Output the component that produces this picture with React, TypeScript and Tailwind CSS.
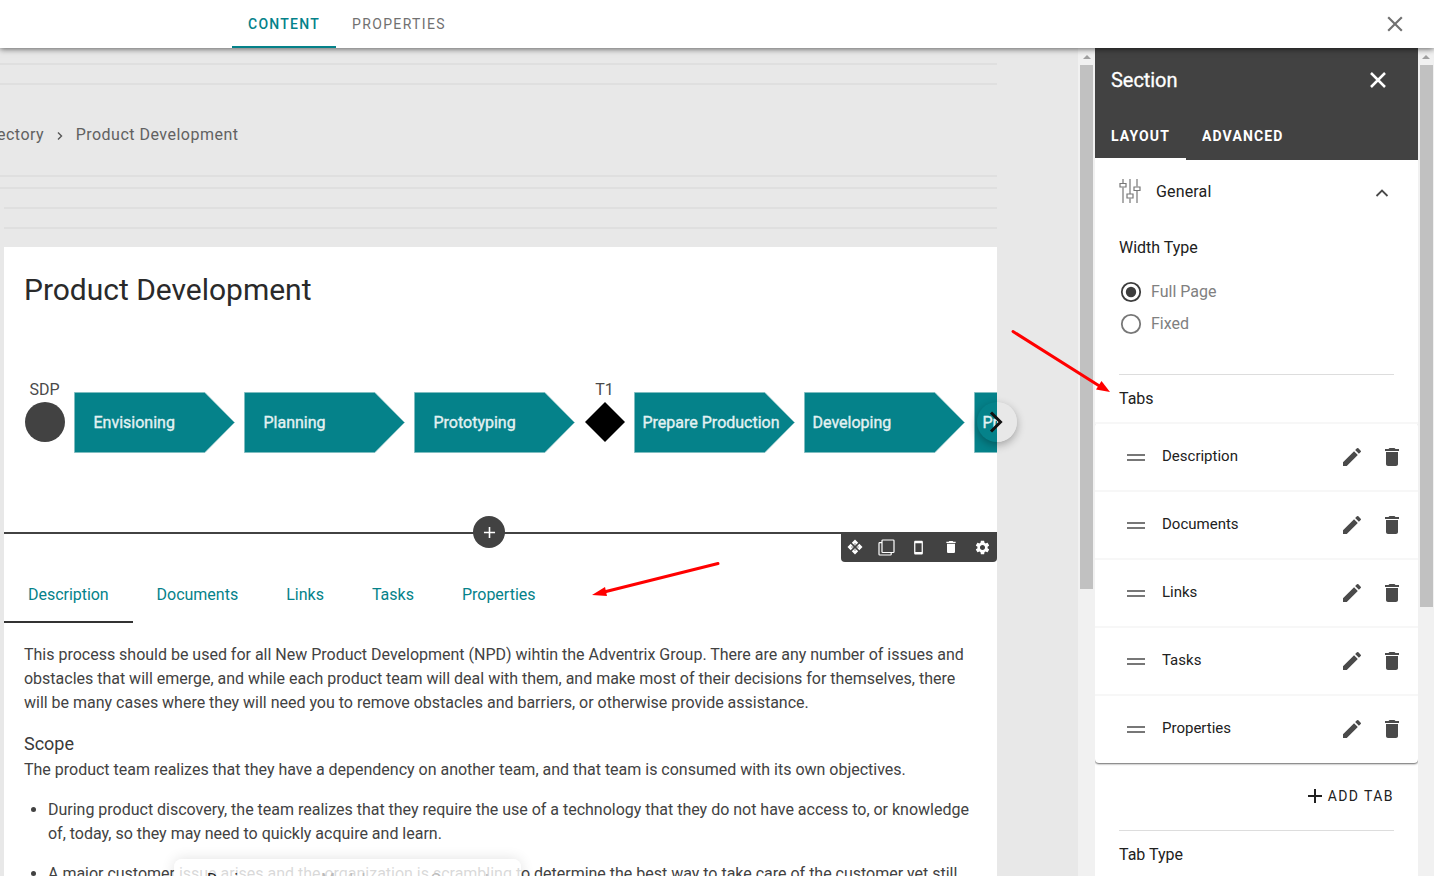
import React from 'react';

const PATHS = {
  close: 'M19 6.41L17.59 5 12 10.59 6.41 5 5 6.41 10.59 12 5 17.59 6.41 19 12 13.41 17.59 19 19 17.59 13.41 12z',
  pencil: 'M3 17.25V21h3.75L17.81 9.94l-3.75-3.75L3 17.25zM20.71 7.04a.996.996 0 0 0 0-1.41l-2.34-2.34a.996.996 0 0 0-1.41 0l-1.83 1.83 3.75 3.75 1.83-1.83z',
  trash: 'M6 19c0 1.1.9 2 2 2h8c1.1 0 2-.9 2-2V7H6v12zM19 4h-3.5l-1-1h-5l-1 1H5v2h14V4z',
  plus: 'M19 13h-6v6h-2v-6H5v-2h6V5h2v6h6v2z',
  gear: 'M19.14 12.94c.04-.3.06-.61.06-.94 0-.32-.02-.64-.07-.94l2.03-1.58c.18-.14.23-.41.12-.61l-1.92-3.32c-.12-.22-.37-.29-.59-.22l-2.39.96c-.5-.38-1.03-.7-1.62-.94l-.36-2.54c-.04-.24-.24-.41-.48-.41h-3.84c-.24 0-.43.17-.47.41l-.36 2.54c-.59.24-1.13.57-1.62.94l-2.39-.96c-.22-.08-.47 0-.59.22L2.74 8.87c-.12.21-.08.47.12.61l2.03 1.58c-.05.3-.09.63-.09.94s.02.64.07.94l-2.03 1.58c-.18.14-.23.41-.12.61l1.92 3.32c.12.22.37.29.59.22l2.39-.96c.5.38 1.03.7 1.62.94l.36 2.54c.05.24.24.41.48.41h3.84c.24 0 .44-.17.47-.41l.36-2.54c.59-.24 1.13-.56 1.62-.94l2.39.96c.22.08.47 0 .59-.22l1.92-3.32c.12-.22.07-.47-.12-.61l-2.01-1.58zM12 15.6c-1.98 0-3.6-1.62-3.6-3.6s1.62-3.6 3.6-3.6 3.6 1.62 3.6 3.6-1.62 3.6-3.6 3.6z',
  phone: 'M17 1.01L7 1c-1.1 0-2 .9-2 2v18c0 1.1.9 2 2 2h10c1.1 0 2-.9 2-2V3c0-1.1-.9-1.99-2-1.99zM17 19H7V5h10v14z',
};

function Icon({ name, className }: { name: keyof typeof PATHS; className: string }) {
  return (
    <svg viewBox="0 0 24 24" fill="currentColor" className={className}>
      <path d={PATHS[name]} />
    </svg>
  );
}

function Header() {
  return (
    <header className="relative z-20 flex h-12 shrink-0 bg-white pl-[232px] text-sm leading-5 shadow-[0_1px_6px_rgba(0,0,0,0.6)]">
      <div className="flex w-[104px] items-center justify-center border-b-2 border-[#05828a] pt-0.5 font-medium tracking-[1.25px] text-[#05828a]">CONTENT</div>
      <div className="flex items-center px-4 tracking-[1.35px] text-[#717171]">PROPERTIES</div>
      <div className="ml-auto flex w-[78px] items-center justify-center">
        <Icon name="close" className="size-[26px] text-[#717171]" />
      </div>
    </header>
  );
}

function Scrollbar({ size, thumb }: { size: string; thumb: string }) {
  return (
    <div className={`flex shrink-0 flex-col items-center bg-[#f1f1f1] pt-[7px] ${size}`}>
      <svg viewBox="0 0 8 4" className="h-1 w-2 shrink-0">
        <path d="M4 0L8 4H0z" fill="#a0a0a0" />
      </svg>
      <div className={`mt-[6px] w-[13px] shrink-0 bg-[#c1c1c1] ${thumb}`} />
    </div>
  );
}

function Stage({ label, pad = 'pl-[19.5px]' }: { label: string; pad?: string }) {
  return (
    <div className={`relative h-[61px] w-40 shrink-0 ${pad}`}>
      <svg viewBox="0 0 160 61" className="absolute inset-0 h-[61px] w-40 overflow-visible">
        <path d="M.5 .5H130.8L160.500 30.5L130.8 60.5H.5Z" fill="#05828a" stroke="#7fbcc0" strokeWidth="0.9" />
      </svg>
      <span className="relative leading-[61px] whitespace-nowrap text-[#e3f1f2] [-webkit-text-stroke:0.35px_#e3f1f2]">{label}</span>
    </div>
  );
}

function Marker({ label, diamond }: { label: string; diamond?: boolean }) {
  return (
    <div className="-mt-3 flex w-10 shrink-0 flex-col items-center pl-px text-[#4a4a4a]">
      <span className="h-[22px] leading-[20px]">{label}</span>
      <svg viewBox="0 0 40 40" className="size-10 shrink-0">
        {diamond ? <path d="M20 0L40 20L20 40L0 20z" fill="#000" /> : <circle cx="20" cy="20" r="20" fill="#424242" />}
      </svg>
    </div>
  );
}

function Process() {
  return (
    <div className="relative mt-[83px]">
      <div className="flex h-[61px] gap-[10px] pl-5 text-base [clip-path:inset(-30px_0_0_0)]">
        <Marker label="SDP" />
        <Stage label="Envisioning" />
        <Stage label="Planning" />
        <Stage label="Prototyping" />
        <Marker label="T1" diamond />
        <Stage label="Prepare Production" pad="pl-[8.5px]" />
        <Stage label="Developing" pad="pl-[8.5px]" />
        <Stage label="Production" pad="pl-[8.5px]" />
      </div>
      <div className="absolute top-[10px] -right-5 flex size-10 items-center justify-center overflow-hidden rounded-full shadow-[0_3px_8px_rgba(0,0,0,0.3)]">
        <svg viewBox="0 0 40 40" className="size-10">
          <path d="M20 0A20 20 0 0 1 20 40z" fill="#e8e8e8" />
          <path d="M14 10.5L23.500 20L14 29.5" fill="none" stroke="#111" strokeWidth="3" />
        </svg>
      </div>
    </div>
  );
}

function Toolbar() {
  return (
    <div className="absolute top-0 right-0 flex h-[30px] w-[156px] justify-center rounded-b bg-[#424242] pr-px text-white *:flex *:w-8 *:shrink-0 *:items-center *:justify-center">
      <div>
        <svg viewBox="0 0 16 16" className="size-4" fill="currentColor">
          <path d="M8 .5L11.2 3.7L8 6.7L4.8 3.7zM8 15.5L4.8 12.3L8 9.3L11.2 12.3zM.5 8L3.7 4.8L6.7 8L3.7 11.2zM15.5 8L12.3 11.2L9.3 8L12.3 4.8z" />
          <path d="M7 4h2v2H7zM7 10h2v2H7zM4 7h2v2H4zM10 7h2v2h-2z" fill="#424242" fillOpacity="0.3" />
        </svg>
      </div>
      <div>
        <svg viewBox="0 0 17 17" className="size-[17px]" fill="none" stroke="currentColor" strokeWidth="1.2">
          <rect x="4" y="1" width="12" height="12.5" rx=".8" />
          <path d="M4 3.7H1.8a.8.8 0 0 0-.8.8V15.2a.8.8 0 0 0 .8.8H12.4a.8.8 0 0 0 .8-.8V13.5" />
        </svg>
      </div>
      <div>
        <Icon name="phone" className="size-[15px]" />
      </div>
      <div>
        <Icon name="trash" className="size-4" />
      </div>
      <div>
        <Icon name="gear" className="size-[17px]" />
      </div>
    </div>
  );
}

const CONTENT_TABS = ['Documents', 'Links', 'Tasks', 'Properties'];

function ContentSection() {
  return (
    <section className="relative border-t-2 border-[#424242]">
      <div className="absolute -top-[18px] left-[469px] flex size-8 items-center justify-center rounded-full bg-[#424242] text-white">
        <Icon name="plus" className="size-[19px]" />
      </div>
      <div className="absolute -top-0.5 right-0">
        <Toolbar />
      </div>
      <div className="mt-8 flex h-[57px] text-base text-[#05828a]">
        <div className="w-[129px] border-b-2 border-[#333] pl-6 leading-[58px] tracking-[-0.03px]">Description</div>
        <div className="flex gap-12 pl-[23.5px] leading-[58px]">
          {CONTENT_TABS.map((t) => (
            <span key={t}>{t}</span>
          ))}
        </div>
      </div>
      <div className="px-5 pt-5 text-base leading-6 tracking-[-0.008px] whitespace-nowrap text-[#424242]">
        <p>
          This process should be used for all New Product Development (NPD) wihtin the Adventrix Group. There are any number of issues and
          <br />
          obstacles that will emerge, and while each product team will deal with them, and make most of their decisions for themselves, there
          <br />
          will be many cases where they will need you to remove obstacles and barriers, or otherwise provide assistance.
        </p>
        <h2 className="mt-[15px] text-lg leading-7 text-[#3a3a3a]">Scope</h2>
        <p>The product team realizes that they have a dependency on another team, and that team is consumed with its own objectives.</p>
        <ul className="mt-4 list-disc space-y-4 pl-6">
          <li>
            During product discovery, the team realizes that they require the use of a technology that they do not have access to, or knowledge
            <br />
            of, today, so they may need to quickly acquire and learn.
          </li>
          <li>A major customer issue arises and the organization is scrambling to determine the best way to take care of the customer yet still</li>
        </ul>
      </div>
    </section>
  );
}

function Canvas() {
  return (
    <main className="relative min-w-0 flex-1 overflow-hidden bg-[#e8e8e8]">
      <div className="w-[997px]">
        <div className="mt-[15px] h-[22px] border-y-2 border-[#dfdfdf]" />
        <nav className="mt-[35px] -ml-[3px] flex h-[30px] items-center text-base tracking-[0.49px] text-[#616161]">
          <span>ectory</span>
          <svg viewBox="0 0 8 10" className="mt-px ml-3 h-[10px] w-2" fill="none" stroke="#555" strokeWidth="1.4">
            <path d="M2 1.500L5.500 5L2 8.500" />
          </svg>
          <span className="ml-[11.5px]">Product Development</span>
        </nav>
        <div className="mt-[25px] h-[14px] border-y-2 border-[#dfdfdf]" />
        <div className="mt-[18px] ml-1 h-[22px] border-y-2 border-[#dfdfdf]" />
        <article className="mt-[18px] ml-1 h-[660px] bg-white">
          <div className="h-[285px] pt-6">
            <h1 className="pl-5 text-[30px] leading-[38px] tracking-[-0.02px] text-[#2a2a2a]">Product Development</h1>
            <Process />
          </div>
          <ContentSection />
        </article>
      </div>
      <div className="absolute top-[811px] left-[174px] flex h-14 w-[347px] gap-[65px] rounded-lg bg-white/80 pt-[11px] pl-[33px] text-base leading-5 text-[#bbb] shadow-[0_0_14px_rgba(0,0,0,0.12)]">
        <span className="text-[#222]">Design</span>
        <span>Model</span>
        <span>Connect</span>
      </div>
    </main>
  );
}

const TABS = ['Description', 'Documents', 'Links', 'Tasks', 'Properties'];

function TabRow({ label }: { label: string }) {
  return (
    <li className="flex h-[68px] items-center border-t-2 border-[#f7f7f7] pl-8">
      <svg viewBox="0 0 18 7" className="h-[7px] w-[18px]" fill="#777">
        <path d="M0 0h18v2H0zM0 5h18v2H0z" />
      </svg>
      <span className="-mt-0.5 ml-[17px] w-[178px] text-[15px] text-[#212121]">{label}</span>
      <Icon name="pencil" className="-mt-px size-6 text-[#4a4a4a]" />
      <Icon name="trash" className="-mt-px ml-4 size-6 text-[#4a4a4a]" />
    </li>
  );
}

function Radio({ label, checked }: { label: string; checked?: boolean }) {
  return (
    <div className="flex h-8 items-center gap-[9px] pl-px text-[#808080]">
      <svg viewBox="0 0 22 22" className="size-[22px]">
        <circle cx="11" cy="11" r="9.2" fill="none" stroke={checked ? '#3d3d3d' : '#777'} strokeWidth="1.8" />
        {checked && <circle cx="11" cy="11" r="5.2" fill="#3d3d3d" />}
      </svg>
      <span>{label}</span>
    </div>
  );
}

function Panel() {
  return (
    <aside className="w-[323px] shrink-0 overflow-hidden bg-white text-base text-[#212121]">
      <div className="flex h-28 flex-col bg-[#424242] text-white">
        <div className="flex h-16 items-center justify-between pr-7 pl-4">
          <span className="text-xl tracking-[-0.05px] [-webkit-text-stroke:0.3px_white]">Section</span>
          <svg viewBox="0 0 24 24" className="size-6">
            <path d="M5 5L19 19M19 5L5 19" stroke="#fff" strokeWidth="2.5" />
          </svg>
        </div>
        <div className="flex h-12 text-sm leading-[48px] font-bold tracking-[1.13px]">
          <div className="w-[91px] border-b-2 border-white pl-4">LAYOUT</div>
          <div className="pl-4">ADVANCED</div>
        </div>
      </div>
      <div className="flex h-[62px] items-center pr-[29px] pl-6">
        <svg viewBox="0 0 22 24" className="h-6 w-[22px]" fill="none" stroke="#777" strokeWidth="1.2">
          <path d="M4 0V4M4 8.500V24M11 0V15M11 19.500V24M18 0V7.500M18 12V24" />
          <path d="M1 4.500H7V8H1zM8 15H14V19H8zM15 8H21V11.500H15z" />
        </svg>
        <span className="mt-0.5 ml-[15px] tracking-[0.15px]">General</span>
        <svg viewBox="0 0 14 8" className="mt-[3px] ml-auto h-2 w-[14px]" fill="none" stroke="#4a4a4a" strokeWidth="1.8">
          <path d="M1.500 7L7 1.500L12.500 7" />
        </svg>
      </div>
      <div className="mx-6 h-[153px] border-b border-[#ddd] pt-[14px]">
        <div className="h-10 leading-6">Width Type</div>
        <Radio label="Full Page" checked />
        <Radio label="Fixed" />
      </div>
      <div className="h-[47px] pt-3 pl-6 leading-6">Tabs</div>
      <ul className="h-[341px] rounded-sm shadow-[0_1px_2px_rgba(0,0,0,0.6)] [clip-path:inset(0_0_-5px_0)]">
        {TABS.map((t) => (
          <TabRow key={t} label={t} />
        ))}
      </ul>
      <div className="mx-6 flex h-[68px] items-center justify-end border-b border-[#ddd] pb-0.5 text-sm tracking-[1.42px]">
        <Icon name="plus" className="mr-px size-6" />
        ADD TAB
      </div>
      <div className="pt-3 pl-6 leading-6">Tab Type</div>
    </aside>
  );
}

function Arrows() {
  return (
    <svg viewBox="0 0 1434 876" className="pointer-events-none absolute inset-0 z-30 h-[876px] w-[1434px]" fill="#f00" stroke="#f00">
      <path d="M1013 331.500L1101 387" strokeWidth="3" strokeLinecap="round" />
      <path d="M1110 392L1096 389.500L1101.500 381z" stroke="none" />
      <path d="M718 563.500L604 592" strokeWidth="3" strokeLinecap="round" />
      <path d="M592 595L605 587L607 596z" stroke="none" />
    </svg>
  );
}

export default function App() {
  return (
    <div className="relative flex h-[876px] w-[1434px] flex-col overflow-hidden bg-[#e8e8e8] font-['Roboto',sans-serif]">
      <Header />
      <div className="flex min-h-0 flex-1">
        <Canvas />
        <Scrollbar size="w-[17px]" thumb="h-[524px]" />
        <Panel />
        <Scrollbar size="w-4" thumb="h-[542px]" />
      </div>
      <Arrows />
    </div>
  );
}
